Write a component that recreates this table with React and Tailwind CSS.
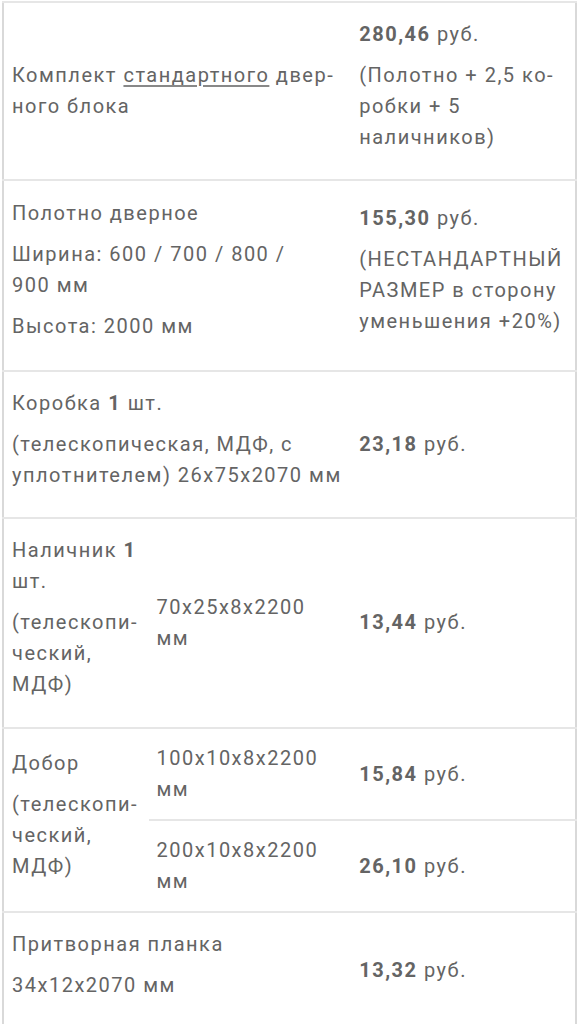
import React from "react";

const B = ({ children }) => <b className="font-bold">{children}</b>;
const P = ({ children }) => <p className="mb-[10px]">{children}</p>;

export default function App() {
  const td = "px-2 py-4 align-middle";
  const tdL = "px-2 pt-[17px] pb-[18px] align-middle";
  const tdM = "px-2 pt-[16px] pb-[17px] align-middle";
  const tdS = "px-2 py-[14px] align-middle";
  return (
    <div className="bg-white min-h-screen pt-[1px] pl-[2px] pr-[2px]" style={{ fontFamily: "Roboto, 'Liberation Sans', sans-serif" }}>
      <table className="table-fixed w-[575px] border-collapse border-2 border-[#d9d9d9] text-[20px] leading-[31px] tracking-[1.5px] text-[#646464]">
        <colgroup>
          <col className="w-[145px]" />
          <col className="w-[202px]" />
          <col className="w-[224px]" />
        </colgroup>
        <tbody>
          <tr className="border-t-2 border-[#e6e6e6]">
            <td colSpan={2} className={td}>
              Комплект <span className="underline decoration-[#888] underline-offset-[3px]">стандартного</span> двер&shy;ного блока
            </td>
            <td className={td}>
              <P><B>280,46</B> руб.</P>
              <P>(Полотно + 2,5 ко&shy;робки + 5 наличников)</P>
            </td>
          </tr>
          <tr className="border-t-2 border-[#e6e6e6]">
            <td colSpan={2} className={tdL}>
              <P>Полотно дверное</P>
              <P>Ширина: 600 / 700 / 800 / 900&nbsp;мм</P>
              <P>Высота: 2000 мм</P>
            </td>
            <td className={tdL}>
              <P><B>155,30</B> руб.</P>
              <P>(НЕСТАНДАРТНЫЙ РАЗМЕР в сторону уменьшения +20%)</P>
            </td>
          </tr>
          <tr className="border-t-2 border-[#e6e6e6]">
            <td colSpan={2} className={td}>
              <P>Коробка <B>1</B> шт.</P>
              <P>(телескопическая, МДФ, с уплотнителем) 26x75x2070 мм</P>
            </td>
            <td className={td}>
              <B>23,18</B> руб.
            </td>
          </tr>
          <tr className="border-t-2 border-[#e6e6e6]">
            <td className={tdM}>
              <P>Наличник <B>1</B> шт.</P>
              <P>(телескопи&shy;ческий, МДФ)</P>
            </td>
            <td className={tdM}>70x25x8x2200 мм</td>
            <td className={tdM}>
              <B>13,44</B> руб.
            </td>
          </tr>
          <tr className="border-t-2 border-[#e6e6e6]">
            <td rowSpan={2} className={td}>
              <P>Добор</P>
              <P>(телескопи&shy;ческий, МДФ)</P>
            </td>
            <td className={tdS}>100x10x8x2200 мм</td>
            <td className={tdS}>
              <B>15,84</B> руб.
            </td>
          </tr>
          <tr className="border-t-2 border-[#e6e6e6]">
            <td className={tdS}>200x10x8x2200 мм</td>
            <td className={tdS}>
              <B>26,10</B> руб.
            </td>
          </tr>
          <tr className="border-t-2 border-[#e6e6e6]">
            <td colSpan={2} className={td}>
              <P>Притворная планка</P>
              <P>34x12x2070 мм</P>
            </td>
            <td className={td}>
              <B>13,32</B> руб.
            </td>
          </tr>
        </tbody>
      </table>
    </div>
  );
}
